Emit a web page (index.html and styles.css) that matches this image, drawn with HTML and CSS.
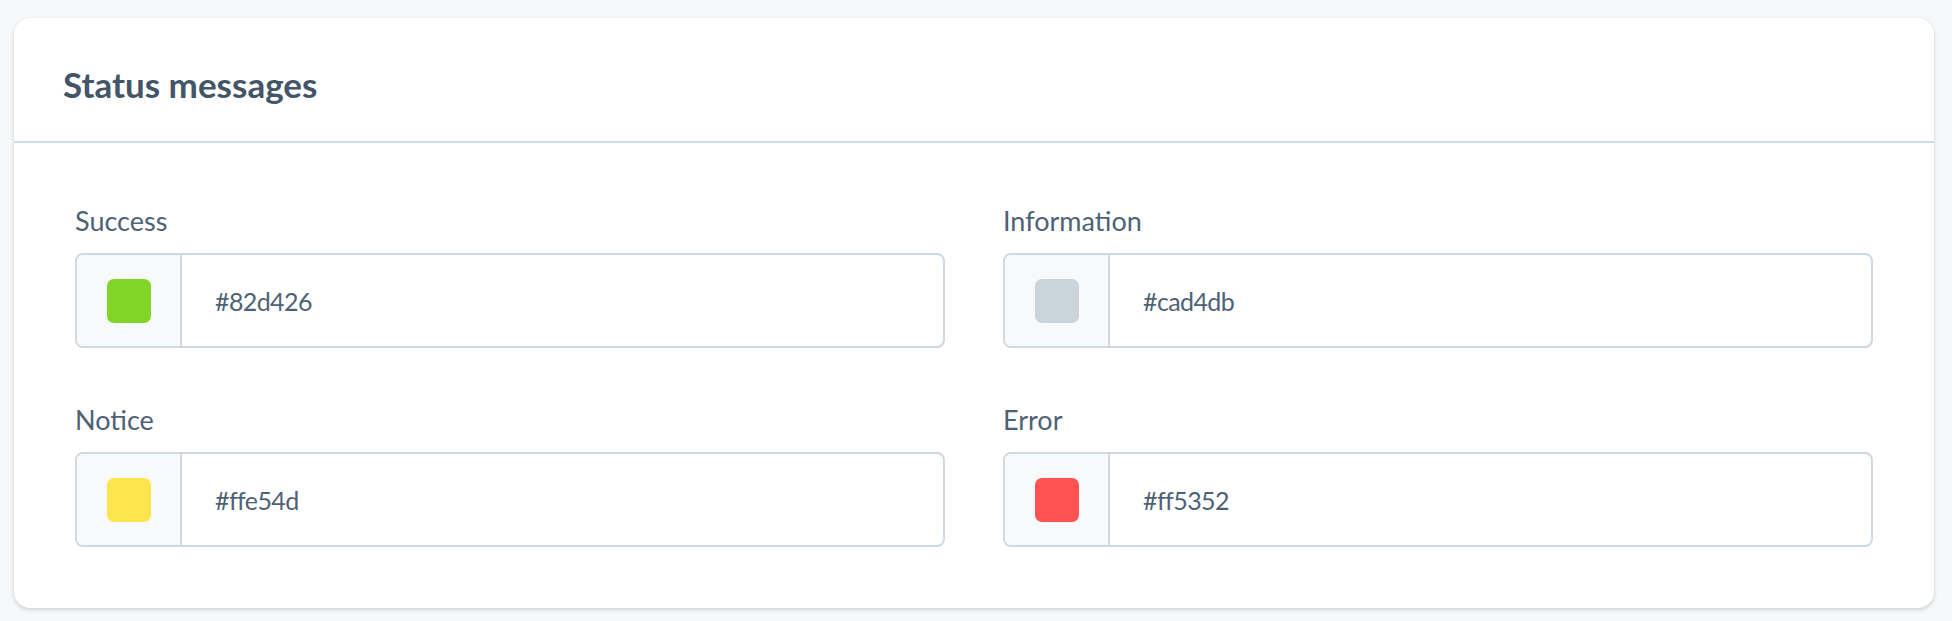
FILE: index.html
```html
<!DOCTYPE html>
<html>
<head>
<meta charset="utf-8">
<link rel="stylesheet" href="styles.css">
</head>
<body>
<div class="card">
  <div class="card-header"><h2 class="title">Status messages</h2></div>
  <div class="card-body">
    <div class="field">
      <label class="label">Success</label>
      <div class="input">
        <div class="swatch-cell"><span class="swatch" style="background:#82d426"></span></div>
        <div class="value">#82d426</div>
      </div>
    </div>
    <div class="field">
      <label class="label">Information</label>
      <div class="input">
        <div class="swatch-cell"><span class="swatch" style="background:#cad4db"></span></div>
        <div class="value">#cad4db</div>
      </div>
    </div>
    <div class="field">
      <label class="label">Notice</label>
      <div class="input">
        <div class="swatch-cell"><span class="swatch" style="background:#ffe54d"></span></div>
        <div class="value">#ffe54d</div>
      </div>
    </div>
    <div class="field">
      <label class="label">Error</label>
      <div class="input">
        <div class="swatch-cell"><span class="swatch" style="background:#ff5352"></span></div>
        <div class="value">#ff5352</div>
      </div>
    </div>
  </div>
</div>
</body>
</html>
```

FILE: styles.css
```css
html, body {
  margin: 0;
  background: #f6f8fa;
}
body {
  padding: 18px 18px 13px 14px;
  font-family: "Lato", "Liberation Sans", sans-serif;
}
.card {
  background: #fff;
  border-radius: 16px;
  box-shadow: 0 2px 4px rgba(0, 0, 0, 0.16), 0 0 2px rgba(0, 0, 0, 0.06);
}
.card-header {
  height: 123px;
  box-sizing: border-box;
  height: 125px;
  padding-top: 8px;
  border-bottom: 2px solid #d3dbe3;
  display: flex;
  align-items: center;
  padding-left: 49px;
}
.title {
  margin: 0;
  font-size: 35px;
  font-weight: 700;
  color: #435567;
}
.card-body {
  display: grid;
  grid-template-columns: 1fr 1fr;
  column-gap: 58px;
  row-gap: 51px;
  padding: 57px 61px 61px 61px;
}
.field {
  display: flex;
  flex-direction: column;
}
.label {
  font-size: 27px;
  line-height: 42px;
  color: #4e6275;
  margin-bottom: 11px;
}
.input {
  display: flex;
  height: 95px;
  box-sizing: border-box;
  border: 2px solid #cfd9e2;
  border-radius: 8px;
  overflow: hidden;
}
.swatch-cell {
  width: 103px;
  background: #f7f9fb;
  border-right: 2px solid #cfd9e2;
  display: flex;
  align-items: center;
  justify-content: center;
}
.swatch {
  width: 44px;
  height: 44px;
  border-radius: 7px;
}
.value {
  display: flex;
  align-items: center;
  padding-left: 33px;
  font-size: 25px;
  letter-spacing: -0.6px;
  color: #4e6275;
}
```
